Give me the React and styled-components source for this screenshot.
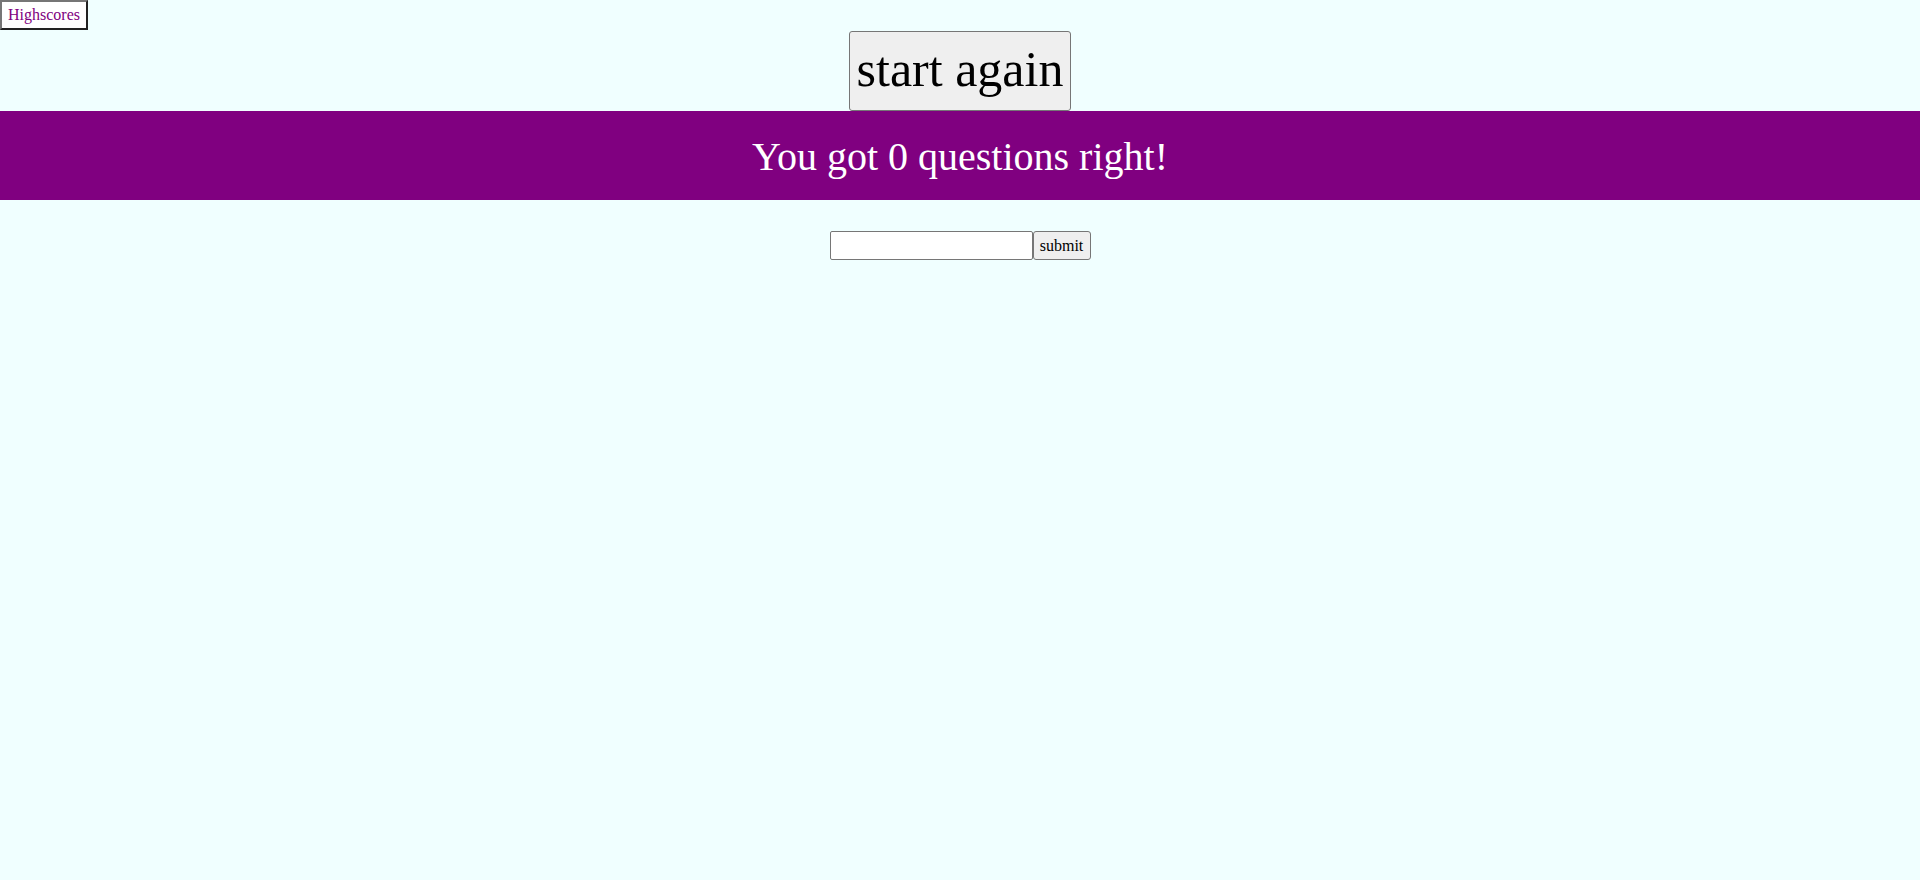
import React from "react";
import styled, { createGlobalStyle } from "styled-components";

const GlobalStyle = createGlobalStyle`
  html, body {
    margin: 0;
    padding: 0;
    background: #f0ffff;
    font-family: "Liberation Serif", "Times New Roman", serif;
  }
`;

const Page = styled.div`
  min-height: 880px;
  background: #f0ffff;
`;

const TopBar = styled.div`
  display: flex;
  margin-bottom: 1px;
`;

const HighscoresButton = styled.button`
  height: 30px;
  width: 88px;
  padding: 0 0 0 6px;
  text-align: left;
  background: #ffffff;
  color: #800080;
  font-family: "Liberation Serif", "Times New Roman", serif;
  font-size: 16px;
  border: 2px solid;
  border-color: #767676 #222222 #222222 #767676;
  border-radius: 0;
  cursor: pointer;
`;

const Header = styled.div`
  display: flex;
  justify-content: center;
`;

const StartButton = styled.button`
  width: 222px;
  height: 80px;
  padding: 0 0 4px;
  background: #efefef;
  color: #000000;
  font-family: "Liberation Serif", "Times New Roman", serif;
  font-size: 50px;
  line-height: 1;
  border: 1px solid #767676;
  border-radius: 3px;
  cursor: pointer;
`;

const Banner = styled.div`
  background: #800080;
  height: 89px;
  display: flex;
  align-items: center;
  justify-content: center;
`;

const Result = styled.h2`
  margin: 0;
  padding-top: 2px;
  color: #ffffff;
  font-weight: normal;
  font-size: 40px;
`;

const Form = styled.form`
  display: flex;
  justify-content: center;
  margin-top: 31px;
`;

const NameInput = styled.input`
  box-sizing: border-box;
  width: 203px;
  height: 29px;
  border: 1px solid #767676;
  border-radius: 2px;
  background: #ffffff;
  font-family: "Liberation Serif", "Times New Roman", serif;
  font-size: 16px;
  padding: 0 3px;
  outline: none;
`;

const SubmitButton = styled.button`
  box-sizing: border-box;
  width: 58px;
  height: 29px;
  padding: 0;
  background: #efefef;
  color: #000000;
  border: 1px solid #767676;
  border-radius: 3px;
  font-family: "Liberation Serif", "Times New Roman", serif;
  font-size: 16px;
  cursor: pointer;
`;

export default function App() {
  const score = 0;
  return (
    <Page>
      <GlobalStyle />
      <TopBar>
        <HighscoresButton>Highscores</HighscoresButton>
      </TopBar>
      <Header>
        <StartButton>start again</StartButton>
      </Header>
      <Banner>
        <Result>You got {score} questions right!</Result>
      </Banner>
      <Form onSubmit={(e) => e.preventDefault()}>
        <NameInput type="text" />
        <SubmitButton type="submit">submit</SubmitButton>
      </Form>
    </Page>
  );
}
